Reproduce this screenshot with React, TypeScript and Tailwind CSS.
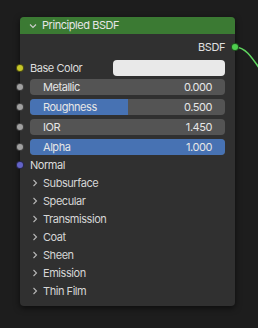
import React from 'react'

const font = { fontFamily: 'Inter, "DejaVu Sans", sans-serif' }

type Field = { label: string; value: string; fill: number }

const fields: Field[] = [
  { label: 'Metallic', value: '0.000', fill: 0 },
  { label: 'Roughness', value: '0.500', fill: 0.5 },
  { label: 'IOR', value: '1.450', fill: 0 },
  { label: 'Alpha', value: '1.000', fill: 1 },
]

const panels = ['Subsurface', 'Specular', 'Transmission', 'Coat', 'Sheen', 'Emission', 'Thin Film']

function Socket({ color }: { color: string }) {
  return (
    <span
      className="absolute -left-[4px] top-1/2 -translate-y-1/2 size-[8px] rounded-full border border-black/60"
      style={{ backgroundColor: color }}
    />
  )
}

function Chevron({ down }: { down?: boolean }) {
  return (
    <svg width="8" height="8" viewBox="0 0 8 8" className="shrink-0">
      {down ? (
        <path d="M1 2.5 L4 5.5 L7 2.5" fill="none" stroke="#cfcfcf" strokeWidth="1.1" />
      ) : (
        <path d="M2.5 1 L5.5 4 L2.5 7" fill="none" stroke="#b8b8b8" strokeWidth="1.1" />
      )}
    </svg>
  )
}

export default function App() {
  return (
    <div
      className="relative w-[258px] h-[328px] bg-[#1d1d1d] overflow-hidden text-[11px] tracking-[-0.45px]"
      style={font}
    >
      {/* wire leaving the BSDF output */}
      <svg className="absolute left-0 top-0" width="258" height="328">
        <path d="M235 47 C 245 47, 251 56, 262 72" fill="none" stroke="#5fd35f" strokeWidth="1.6" />
      </svg>

      <div className="absolute left-[20px] top-[17px] w-[215px] h-[289px] rounded-[4px] bg-[#303030] shadow-[0_2px_6px_rgba(0,0,0,0.6)] flex flex-col">
        {/* header */}
        <div className="h-[17px] shrink-0 rounded-t-[4px] bg-[#3b7a33] flex items-center gap-[5px] pl-[9px] text-[#e6e6e6]">
          <Chevron down />
          <span className="leading-none">Principled BSDF</span>
        </div>

        <div className="flex flex-col pt-[4px]">
          {/* output */}
          <div className="relative h-[18px] flex items-center justify-end pr-[10px] text-[#e0e0e0]">
            <span>BSDF</span>
            <span className="absolute -right-[4px] top-1/2 -translate-y-1/2 size-[8px] rounded-full border border-black/60 bg-[#4fcf4f]" />
          </div>

          {/* base color */}
          <div className="relative h-[16px] mt-[4px] flex items-center pl-[10px] pr-[10px] text-[#dcdcdc]">
            <Socket color="#c7c729" />
            <span className="flex-1">Base Color</span>
            <span className="w-[112px] h-[16px] rounded-[4px] bg-[#e9e9e9]" />
          </div>

          {/* sliders */}
          <div className="flex flex-col gap-[4px] mt-[3px]">
            {fields.map((f) => (
              <div key={f.label} className="relative h-[16px]">
                <Socket color="#a1a1a1" />
                <div className="relative mx-[10px] h-[16px] rounded-[4px] bg-[#545454] overflow-hidden flex items-center px-[13px] text-[#e6e6e6]">
                  {f.fill > 0 && (
                    <span
                      className="absolute left-0 top-0 bottom-0 bg-[#4772b3]"
                      style={{ width: `${f.fill * 100}%` }}
                    />
                  )}
                  <span className="relative flex-1">{f.label}</span>
                  <span className="relative">{f.value}</span>
                </div>
              </div>
            ))}
          </div>

          {/* normal */}
          <div className="relative h-[16px] mt-[2px] flex items-center pl-[10px] text-[#dcdcdc]">
            <Socket color="#6363c7" />
            <span>Normal</span>
          </div>

          {/* collapsed panels */}
          <div className="flex flex-col mt-[1px]">
            {panels.map((p) => (
              <div key={p} className="h-[18px] flex items-center gap-[4px] pl-[11px] text-[#d6d6d6]">
                <Chevron />
                <span>{p}</span>
              </div>
            ))}
          </div>
        </div>
      </div>
    </div>
  )
}
